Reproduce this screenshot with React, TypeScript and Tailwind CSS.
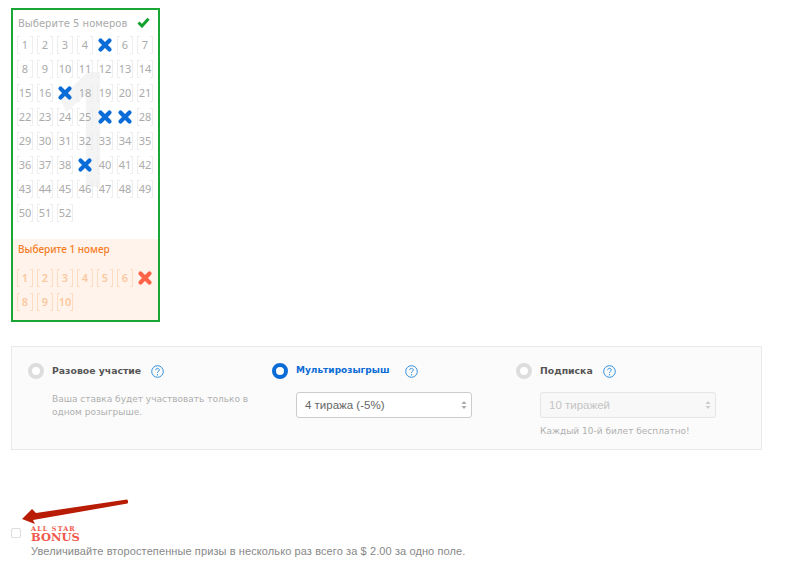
const mainNumbers = Array.from({ length: 52 }, (_, i) => i + 1);
const bonusNumbers = Array.from({ length: 10 }, (_, i) => i + 1);
const mainPicked = [5, 17, 26, 27, 39];

function Cross({ color }: { color: string }) {
  return (
    <svg width="16" height="16" viewBox="0 0 16 16" className="block">
      <path d="M3.5 3.5 L12.5 12.5 M12.5 3.5 L3.5 12.5" stroke={color} strokeWidth="4.2" strokeLinecap="round" />
    </svg>
  );
}

function Cell({ n, picked, bonus }: { n: number; picked: boolean; bonus?: boolean }) {
  if (picked) {
    return (
      <div className="relative w-4 h-[18px] flex items-center justify-center">
        <Cross color={bonus ? "#ff6347" : "#0a6cd6"} />
      </div>
    );
  }
  // bracket look: side borders plus short ticks at the corners
  return bonus ? (
    <div className="relative w-4 h-[18px] border-x border-[#fddcc0] flex items-center justify-center text-[11px] font-semibold text-[#fbc9a0] before:absolute before:top-0 before:-inset-x-px before:h-px before:bg-[linear-gradient(to_right,#fddcc0_3px,transparent_3px,transparent_13px,#fddcc0_13px)] after:absolute after:bottom-0 after:-inset-x-px after:h-px after:bg-[linear-gradient(to_right,#fddcc0_3px,transparent_3px,transparent_13px,#fddcc0_13px)]">
      {n}
    </div>
  ) : (
    <div className="relative w-4 h-[18px] border-x border-[#eeeeee] flex items-center justify-center text-[11px] text-[#aaaaaa] before:absolute before:top-0 before:-inset-x-px before:h-px before:bg-[linear-gradient(to_right,#eeeeee_3px,transparent_3px,transparent_13px,#eeeeee_13px)] after:absolute after:bottom-0 after:-inset-x-px after:h-px after:bg-[linear-gradient(to_right,#eeeeee_3px,transparent_3px,transparent_13px,#eeeeee_13px)]">
      {n}
    </div>
  );
}

function Help() {
  return (
    <svg width="13" height="13" viewBox="0 0 13 13" className="block">
      <circle cx="6.5" cy="6.5" r="5.8" fill="none" stroke="#2f8fe0" strokeWidth="1" />
      <path d="M4.7 5.1 C4.7 2.8 8.3 2.8 8.3 5 C8.3 6.4 6.5 6.2 6.5 7.9" fill="none" stroke="#2f8fe0" strokeWidth="1" />
      <circle cx="6.5" cy="9.8" r="0.7" fill="#2f8fe0" />
    </svg>
  );
}

function Radio({ active }: { active?: boolean }) {
  return active ? (
    <div className="w-4 h-4 rounded-full border-[4px] border-[#0a6cd6] bg-white" />
  ) : (
    <div className="w-4 h-4 rounded-full border-[4px] border-[#dddddd] bg-white" />
  );
}

function Carets({ color }: { color: string }) {
  return (
    <svg width="6" height="8" viewBox="0 0 6 8" className="block">
      <path d="M3 0 L5.5 3 H0.5 Z M3 8 L0.5 5 H5.5 Z" fill={color} />
    </svg>
  );
}

export default function App() {
  return (
    <div className="w-[787px] h-[581px] overflow-hidden bg-white pl-[11px] pt-2 font-['Noto_Sans',sans-serif]">
      {/* Ticket */}
      <div className="relative w-[149px] h-[314px] border-2 border-[#1aa634] flex flex-col overflow-hidden">
        <svg width="50" height="120" viewBox="0 0 50 120" className="absolute left-[45px] top-[60px]">
          <path d="M42 2 H30 L2 28 L8 42 L28 25 V117 H42 Z" fill="#f4f4f4" />
        </svg>
        <div className="relative h-[229px] px-1">
          <div className="flex items-start justify-between pt-[7px] pl-px pr-1 h-[25px]">
            <span className="text-[10px] leading-[13px] font-['DejaVu_Sans',sans-serif] font-medium text-[#aaaaaa]">Выберите 5 номеров</span>
            <svg width="13" height="11" viewBox="0 0 13 11" className="block">
              <path d="M1.5 5.5 L5 9 L11.5 1.8" fill="none" stroke="#12a12e" strokeWidth="3" />
            </svg>
          </div>
          <div className="grid grid-cols-[repeat(7,16px)] gap-x-1 gap-y-1.5 mt-px">
            {mainNumbers.map((n) => (
              <Cell key={n} n={n} picked={mainPicked.includes(n)} />
            ))}
          </div>
        </div>
        <div className="relative flex-1 bg-[#fff3eb] px-1">
          <div className="pt-[3px] pl-px text-[10px] font-medium text-[#f57c1f]">Выберите 1 номер</div>
          <div className="grid grid-cols-[repeat(7,16px)] gap-x-1 gap-y-1.5 mt-[12px]">
            {bonusNumbers.slice(0, 6).map((n) => (
              <Cell key={n} n={n} picked={false} bonus />
            ))}
            <Cell n={7} picked bonus />
            {bonusNumbers.slice(7).map((n) => (
              <Cell key={n} n={n} picked={false} bonus />
            ))}
          </div>
        </div>
      </div>

      {/* Draw options */}
      <div className="mt-[24px] w-[751px] h-[104px] border border-[#e9e9e9] bg-[#fbfbfb] flex font-['DejaVu_Sans',sans-serif]">
        <div className="w-[244px] pl-4 pt-4">
          <div className="flex items-center h-4">
            <Radio />
            <span className="ml-2 text-[9.3px] font-bold text-[#555555]">Разовое участие</span>
            <span className="ml-[10px]"><Help /></span>
          </div>
          <p className="ml-6 mt-[14px] w-[200px] text-[9px] leading-[13px] text-[#b0b0b0]">
            Ваша ставка будет участвовать только в одном розыгрыше.
          </p>
        </div>
        <div className="w-[244px] pl-4 pt-4">
          <div className="flex items-center h-4">
            <Radio active />
            <span className="ml-2 text-[9px] font-bold text-[#0a6cd6]">Мультирозыгрыш</span>
            <span className="ml-4"><Help /></span>
          </div>
          <div className="ml-6 mt-[13px] w-[176px] h-[26px] border border-[#cccccc] rounded-[3px] bg-white flex items-center justify-between pl-2 pr-1 text-[11.5px] text-[#666666] font-['Liberation_Sans',sans-serif]">
            <span className="mt-px">4 тиража (-5%)</span>
            <Carets color="#aaaaaa" />
          </div>
        </div>
        <div className="flex-1 pl-4 pt-4">
          <div className="flex items-center h-4">
            <Radio />
            <span className="ml-2 text-[9.3px] font-bold text-[#555555]">Подписка</span>
            <span className="ml-[10px]"><Help /></span>
          </div>
          <div className="ml-6 mt-[13px] w-[176px] h-[26px] border border-[#e6e6e6] rounded-[3px] bg-[#f8f8f8] flex items-center justify-between pl-2 pr-1 text-[11.5px] text-[#c4c4c4] font-['Liberation_Sans',sans-serif]">
            <span className="mt-px">10 тиражей</span>
            <Carets color="#cccccc" />
          </div>
          <p className="ml-6 mt-[7px] text-[9px] leading-[13px] text-[#b0b0b0]">Каждый 10-й билет бесплатно!</p>
        </div>
      </div>

      {/* Bonus option */}
      <div className="relative mt-[76px] flex items-start">
        <div className="mt-[2px] w-[10px] h-[10px] border border-[#dddddd] rounded-[2px] bg-white" />
        <div className="ml-[10px]">
          <div className="font-['DejaVu_Serif',serif] font-bold text-[#f0584c]">
            <div className="text-[6.5px] leading-[6px] tracking-[1.1px]">ALL STAR</div>
            <div className="text-[11.5px] leading-[10px]">BONUS</div>
          </div>
          <p className="mt-[3px] text-[11px] leading-3 tracking-[0.1px] text-[#888888] font-['Liberation_Sans',sans-serif]">
            Увеличивайте второстепенные призы в несколько раз всего за $ 2.00 за одно поле.
          </p>
        </div>
        <svg width="120" height="32" viewBox="0 0 120 32" className="absolute left-0 top-[-30px]">
          <path d="M116 3.5 Q118 5 116.5 7.5 L22 24 L24 28 L11 23 L21 13 L25 17 Z" fill="#b81c05" />
        </svg>
      </div>
    </div>
  );
}
